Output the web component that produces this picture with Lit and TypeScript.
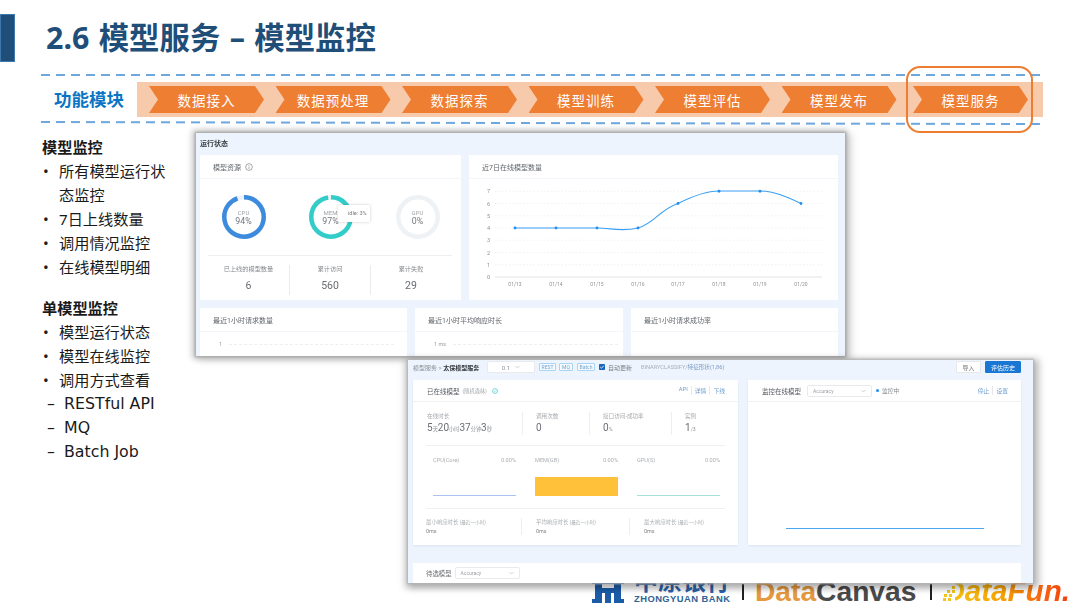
import { LitElement, html, svg, css } from "lit";
import { customElement } from "lit/decorators.js";

const STEPS = ["数据接入", "数据预处理", "数据探索", "模型训练", "模型评估", "模型发布", "模型服务"];

const RINGS = [
  { name: "CPU", pct: 94, color: "#3d8bdc" },
  { name: "MEM", pct: 97, color: "#33cdc9" },
  { name: "GPU", pct: 0, color: "#3d8bdc" },
];

const CHART_X = [46, 87, 128, 169, 209, 250, 291, 332];
const CHART_DAYS = ["01/13", "01/14", "01/15", "01/16", "01/17", "01/18", "01/19", "01/20"];
const CHART_V = [4, 4, 4, 4, 6, 7, 7, 6];
const yOf = (v: number) => 98 - v * 12.25;

const Y_FONT = "Roboto, 'Noto Sans CJK SC', sans-serif";

@customElement("app-root")
export class AppRoot extends LitElement {
  static styles = css`
    :host {
      display: block;
      font-family: "Noto Sans", "Noto Sans CJK SC", sans-serif;
    }
    .slide {
      position: relative;
      width: 1080px;
      height: 608px;
      overflow: hidden;
      background: #fff;
      display: flex;
      flex-direction: column;
    }

    /* head + module strip */
    .head {
      display: flex;
      align-items: center;
      gap: 31px;
      height: 48px;
      margin-top: 14px;
    }
    .accent {
      width: 15px;
      height: 48px;
      box-sizing: border-box;
      background: #1f4e79;
      border: 1px solid #3f78ab;
    }
    .title {
      font-size: 30.4px;
      font-weight: 700;
      word-spacing: 1.5px;
      color: #1f4e79;
      line-height: 48px;
    }
    .dash {
      width: 1002px;
      height: 2px;
      margin-left: 41px;
      background: repeating-linear-gradient(90deg, #6ea7de 0 9px, transparent 9px 15px);
    }
    .dash.top {
      margin-top: 12px;
    }
    .dash.low {
      margin-top: 4.5px;
      transform: rotate(0.11deg);
    }
    .modules {
      display: flex;
      height: 35px;
      margin: 6px 0 0 41px;
      width: 1002px;
    }
    .mod-label {
      width: 96px;
      padding-left: 13px;
      box-sizing: border-box;
      font-size: 17.5px;
      font-weight: 700;
      color: #0b74c4;
      line-height: 35px;
    }
    .band {
      flex: 1;
      display: flex;
      align-items: center;
      gap: 11.5px;
      padding-left: 12px;
      background: #f7caac;
    }
    .step {
      width: 115px;
      height: 27px;
      display: flex;
      align-items: center;
      justify-content: center;
      background: #ee7e32;
      color: #fff;
      font-size: 13.5px;
      letter-spacing: 1px;
      clip-path: polygon(0 0, calc(100% - 9px) 0, 100% 50%, calc(100% - 9px) 100%, 0 100%, 9px 50%);
    }
    .step:last-child {
      margin-left: 5px;
    }
    .mark {
      position: absolute;
      left: 906px;
      top: 66px;
      width: 127px;
      height: 67px;
      box-sizing: border-box;
      border: 2px solid #ed7d31;
      border-radius: 14px;
    }

    /* left text */
    .notes {
      margin: 11px 0 0 42px;
      width: 135px;
      font-size: 15.2px;
      line-height: 24px;
      color: #1a1a1a;
    }
    .notes h3 {
      margin: 0;
      font-size: 15.2px;
      font-weight: 700;
      line-height: 24px;
    }
    .notes ul {
      list-style: none;
      margin: 0 0 17px;
      padding: 0;
    }
    .notes li {
      position: relative;
      padding-left: 17px;
    }
    .notes li::before {
      content: "•";
      position: absolute;
      left: 1px;
    }
    .notes li.sub {
      padding-left: 22px;
      font-family: "DejaVu Sans", sans-serif;
      font-size: 15.8px;
    }
    .notes li.sub::before {
      content: "–";
      left: 5px;
    }

    /* footer logos */
    .logos {
      position: absolute;
      left: 592px;
      top: 570px;
      width: 488px;
      height: 38px;
      display: flex;
      align-items: flex-end;
    }
    .logos > * {
      flex-shrink: 0;
    }
    .bank {
      width: 32px;
      height: 24px;
      margin-bottom: 5px;
    }
    .bank-text {
      margin: 0 0 5px 10px;
      width: 108px;
      color: #2b62a8;
    }
    .bank-cn {
      font-size: 24px;
      font-weight: 700;
      line-height: 24px;
      font-family: "Noto Sans CJK SC", sans-serif;
      white-space: nowrap;
    }
    .bank-en {
      font-family: "Liberation Sans", sans-serif;
      font-size: 9.4px;
      line-height: 9px;
      letter-spacing: 0.45px;
      font-weight: 700;
      color: #2f6394;
      white-space: nowrap;
      margin-top: 2px;
    }
    .sep {
      width: 2px;
      height: 16px;
      margin: 0 0 8px 0;
      background: #222;
    }
    .dc {
      margin: 0 14px 1px 11px;
      font-family: "Liberation Sans", sans-serif;
      font-size: 28.2px;
      font-weight: 700;
      line-height: 32px;
      color: #4a4a4a;
      white-space: nowrap;
    }
    .dc b {
      color: #e5993e;
    }
    .df {
      position: relative;
      margin: 0 0 1px 11px;
      font-family: "Liberation Sans", sans-serif;
      font-size: 29.6px;
      font-weight: 700;
      font-style: italic;
      line-height: 32px;
      white-space: nowrap;
      background: linear-gradient(90deg, #f5c518 0%, #f6a500 45%, #f96a10 75%, #f23c0c 100%);
      -webkit-background-clip: text;
      background-clip: text;
      color: transparent;
    }
    .df svg {
      position: absolute;
      left: 0;
      top: 8px;
      width: 15px;
      height: 20px;
    }

    /* screenshots on the slide */
    .win {
      position: absolute;
      box-sizing: border-box;
      background: #edf4fd;
      overflow: hidden;
      color: #5f6368;
      font-family: Roboto, "Noto Sans CJK SC", sans-serif;
    }
    .frame {
      position: absolute;
      filter: blur(0.3px);
    }
    .frame.one {
      left: 196px;
      top: 133px;
      width: 649px;
      height: 223px;
      box-shadow: 0 0 2px 1px #a8a8a8, -1px 0 6px 3px rgba(0, 0, 0, 0.22), 4px 2px 8px 2px rgba(0, 0, 0, 0.16);
    }
    .frame.two {
      left: 408px;
      top: 360px;
      width: 625px;
      height: 223px;
      box-shadow: 0 0 2px 1px #b4b4b4, 3px 2px 7px 3px rgba(0, 0, 0, 0.25), -2px 3px 7px 2px rgba(0, 0, 0, 0.14);
    }
    .frame .win {
      inset: 0;
    }
    .one .win {
      padding: 0 7px 0 4px;
    }
    .win-title {
      height: 22px;
      font-size: 7px;
      font-weight: 700;
      line-height: 22px;
      color: #3c4043;
    }
    .grid-top {
      display: grid;
      grid-template-columns: 261px 369px;
      gap: 8px;
    }
    .grid-low {
      display: grid;
      grid-template-columns: 207px 208px 207px;
      gap: 8px;
      margin-top: 8px;
    }
    .card {
      background: #fff;
    }
    .grid-top .card {
      height: 145px;
    }
    .grid-low .card {
      height: 60px;
    }
    .card-head {
      display: flex;
      align-items: center;
      gap: 4px;
      height: 23px;
      padding-left: 13px;
      font-size: 7px;
      color: #62666b;
      border-bottom: 1.5px solid #f2f5f9;
    }
    .info {
      width: 8px;
      height: 8px;
    }
    .rings {
      position: relative;
      display: grid;
      grid-template-columns: repeat(3, 87px);
      padding-top: 16px;
    }
    .ring {
      position: relative;
      width: 44px;
      height: 44px;
      justify-self: center;
    }
    .ring svg {
      display: block;
    }
    .ring-text {
      position: absolute;
      inset: 0;
      display: flex;
      flex-direction: column;
      align-items: center;
      justify-content: center;
      line-height: 9px;
    }
    .ring-text span {
      font-size: 6px;
      color: #a0a4a8;
    }
    .ring-text b {
      font-weight: 400;
      font-size: 8.8px;
      color: #73777c;
    }
    .tip {
      position: absolute;
      left: 138px;
      top: 26px;
      width: 32px;
      height: 17px;
      box-sizing: border-box;
      padding-left: 10px;
      background: #fff;
      box-shadow: 0 0 3px rgba(0, 0, 0, 0.22);
      border-radius: 1px;
      font-size: 5.5px;
      line-height: 17px;
      color: #777;
      white-space: nowrap;
    }
    .rule {
      height: 1px;
      background: #eceef1;
      margin: 16px 9px 0 8px;
    }
    .totals {
      display: grid;
      grid-template-columns: repeat(3, 81px);
      margin: 9px 0 0 8px;
    }
    .total {
      height: 30px;
      text-align: center;
      border-left: 1px solid #e9ebee;
    }
    .total:first-child {
      border-left: 0;
    }
    .total span {
      display: block;
      font-size: 6.2px;
      line-height: 9px;
      color: #85898e;
    }
    .total b {
      display: block;
      margin-top: 5px;
      font-weight: 400;
      font-size: 10.5px;
      line-height: 14px;
      color: #686c71;
    }
    .chart {
      display: block;
    }
    .low-body {
      display: flex;
      align-items: center;
      gap: 7px;
      margin: 9px 0 0 19px;
      font-size: 5.5px;
      color: #9aa0a6;
    }
    .low-body i {
      flex: 0 0 165px;
      border-top: 1px dashed #eceef1;
    }

    /* second window */
    .two .win {
      padding: 1px 12px 0 5px;
    }
    .bar {
      display: flex;
      align-items: center;
      height: 12px;
      font-size: 6px;
      color: #8b9096;
    }
    .crumb {
      width: 74px;
      white-space: nowrap;
    }
    .crumb b {
      color: #34383c;
      font-weight: 700;
    }
    .select {
      display: flex;
      align-items: center;
      justify-content: space-between;
      box-sizing: border-box;
      height: 12px;
      padding: 0 5px;
      background: #fff;
      border: 1px solid #e8eaed;
      border-radius: 2px;
      font-size: 5px;
      color: #9a9ea3;
    }
    .select svg {
      width: 5px;
      height: 4px;
    }
    .select.ver {
      width: 48px;
      justify-content: center;
      gap: 5px;
      font-size: 6px;
      color: #8a8e93;
      margin-right: 4px;
    }
    .tag {
      box-sizing: border-box;
      height: 8px;
      padding: 0 2px;
      margin-right: 3px;
      border: 1px solid #a9d5f5;
      background: #f4fafe;
      border-radius: 1px;
      font-size: 5px;
      line-height: 6px;
      color: #74a5cf;
      display: flex;
      align-items: center;
      justify-content: center;
    }
    .check {
      width: 6px;
      height: 6px;
      margin: 0 3px 0 1px;
      display: block;
    }
    .auto {
      width: 33px;
      color: #7d8186;
      white-space: nowrap;
    }
    .shape {
      font-size: 5.6px;
      color: #a9b0b8;
      white-space: nowrap;
    }
    .shape em {
      font-style: normal;
      color: #7d9cc4;
    }
    .btn {
      display: flex;
      align-items: center;
      justify-content: center;
      box-sizing: border-box;
      height: 12px;
      background: #fff;
      border: 1px solid #e6e8eb;
      border-radius: 1px;
      font-size: 6px;
      color: #777;
    }
    .btn.import {
      width: 25px;
      margin-left: auto;
    }
    .btn.primary {
      width: 36px;
      margin-left: 4px;
      background: #1976d2;
      border-color: #1976d2;
      color: #fff;
    }
    .panels {
      display: grid;
      grid-template-columns: 325px 273px;
      gap: 10px;
      margin-top: 7px;
    }
    .panel {
      height: 165px;
      background: #fff;
      box-shadow: 0 1px 2px rgba(90, 120, 160, 0.12);
    }
    .panel-head {
      display: flex;
      align-items: center;
      height: 21px;
      padding: 0 13px 0 14px;
      font-size: 6.5px;
      color: #55595e;
      border-bottom: 1px solid #eff1f4;
    }
    .panel-head small {
      font-size: 5.2px;
      color: #a3a7ab;
      margin-left: 3px;
    }
    .ok {
      width: 6px;
      height: 6px;
      margin-left: 5px;
    }
    .links {
      margin-left: auto;
      display: flex;
      gap: 3px;
      font-size: 5.8px;
      color: #6d9ccc;
    }
    .links span + span {
      border-left: 1px solid #e6e8eb;
      padding-left: 3px;
    }
    .stats {
      display: grid;
      grid-template-columns: 95px 67px 82px 54px;
      margin: 10px 13px 0 14px;
    }
    .stat {
      height: 23px;
      padding-left: 13px;
      border-left: 1px solid #eceef1;
    }
    .stat:first-child {
      padding-left: 0;
      border-left: 0;
    }
    .stat span {
      display: block;
      font-size: 5.6px;
      line-height: 8px;
      color: #a5a9ad;
    }
    .stat b {
      display: block;
      font-weight: 400;
      font-size: 10px;
      line-height: 13px;
      margin-top: 1px;
      color: #6b6f74;
      white-space: nowrap;
    }
    .stat b small {
      font-size: 5.2px;
      color: #8d9196;
    }
    .hr {
      height: 1px;
      background: #eef0f2;
      margin: 10px 13px 0 13px;
    }
    .hr.wide {
      margin-top: 12px;
    }
    .usage {
      display: grid;
      grid-template-columns: repeat(3, 83px);
      gap: 19px;
      margin: 9px 0 0 20px;
    }
    .use-top {
      display: flex;
      justify-content: space-between;
      font-size: 5.6px;
      line-height: 10px;
      color: #abafb3;
    }
    .use-plot {
      height: 31px;
      display: flex;
      align-items: flex-end;
    }
    .use-plot i {
      display: block;
      width: 100%;
    }
    .lat {
      display: grid;
      grid-template-columns: 95px 108px 96px;
      margin: 9px 13px 0 13px;
    }
    .lat div {
      height: 17px;
      padding-left: 14px;
      border-left: 1px solid #eceef1;
      font-size: 5.4px;
      line-height: 9px;
      color: #a9adb1;
      white-space: nowrap;
    }
    .lat div:first-child {
      padding-left: 0;
      border-left: 0;
    }
    .lat small {
      font-size: 4.6px;
    }
    .lat span {
      display: block;
      color: #80848a;
    }
    .head-sel {
      margin: 0 4px 0 6px;
      width: 65px;
    }
    .dot {
      width: 3px;
      height: 3px;
      border-radius: 50%;
      background: #1890ff;
      margin-right: 3px;
    }
    .live {
      font-size: 5.8px;
      color: #85898e;
    }
    .plot-flat {
      height: 144px;
      display: flex;
      justify-content: center;
      align-items: flex-end;
    }
    .plot-flat i {
      width: 198px;
      height: 1px;
      margin-bottom: 17px;
      background: #4aa6f0;
    }
    .pending {
      display: flex;
      align-items: center;
      height: 20px;
      margin-top: 18px;
      padding-left: 13px;
      background: #fff;
      font-size: 6.4px;
      color: #686c71;
    }
    .pending .select {
      width: 65px;
      margin-left: 3px;
    }
  `;

  private chevron() {
    return html`<svg viewBox="0 0 10 8"><path d="M1 2l4 4 4-4" fill="none" stroke="#b5b8bc" stroke-width="1.2" /></svg>`;
  }

  private ring(r: { name: string; pct: number; color: string }) {
    const c = 2 * Math.PI * 19.75;
    const len = (r.pct / 100) * c;
    return html`
      <div class="ring">
        <svg width="44" height="44" viewBox="0 0 44 44">
          <circle cx="22" cy="22" r="19.75" fill="none" stroke="#eff2f5" stroke-width="4.5" />
          <circle
            cx="22"
            cy="22"
            r="19.75"
            fill="none"
            stroke=${r.color}
            stroke-width="4.5"
            stroke-dasharray="${len} ${c}"
            transform="rotate(-90 22 22)"
          />
        </svg>
        <div class="ring-text"><span>${r.name}</span><b>${r.pct}%</b></div>
      </div>
    `;
  }

  private trendChart() {
    const line =
      "M46 49 L128 49 C142 49 152 53 169 49 C186 44 190 31 209 24.5 C222 18 236 12 250 12 L291 12 C305 12 318 18 332 24.5";
    return html`
      <svg class="chart" width="369" height="120" viewBox="0 0 369 120">
        ${[1, 2, 3, 4, 5, 6, 7].map(
          (v) => svg`<line x1="26" x2="353" y1=${yOf(v)} y2=${yOf(v)} stroke="#eceef1" stroke-width="0.8" stroke-dasharray="1.5 2" />`
        )}
        <line x1="26" x2="353" y1="98" y2="98" stroke="#d9dcdf" stroke-width="0.8" />
        ${[0, 1, 2, 3, 4, 5, 6, 7].map(
          (v) => svg`<text x="21" y=${yOf(v) + 2} text-anchor="end" font-size="5.5" fill="#8d9196" font-family=${Y_FONT}>${v}</text>`
        )}
        ${CHART_DAYS.map(
          (d, i) => svg`<text x=${CHART_X[i]} y="107" text-anchor="middle" font-size="5" fill="#8d9196" font-family=${Y_FONT}>${d}</text>`
        )}
        <path d=${line} fill="none" stroke="#3aa0f5" stroke-width="1.1" />
        ${CHART_V.map((v, i) => svg`<circle cx=${CHART_X[i]} cy=${yOf(v)} r="1.4" fill="#1f8ff0" />`)}
      </svg>
    `;
  }

  private windowOne() {
    return html`
      <div class="frame one">
        <div class="win">
          <div class="win-title">运行状态</div>
          <div class="grid-top">
            <div class="card">
              <div class="card-head">
                模型资源
                <svg class="info" viewBox="0 0 10 10">
                  <circle cx="5" cy="5" r="4.2" fill="none" stroke="#777" stroke-width="0.8" />
                  <path d="M5 4.4v3M5 2.5v1" stroke="#777" stroke-width="0.8" />
                </svg>
              </div>
              <div class="rings">
                ${RINGS.map((r) => this.ring(r))}
                <div class="tip">idle: 3%</div>
              </div>
              <div class="rule"></div>
              <div class="totals">
                <div class="total"><span>已上线的模型数量</span><b>6</b></div>
                <div class="total"><span>累计访问</span><b>560</b></div>
                <div class="total"><span>累计失败</span><b>29</b></div>
              </div>
            </div>
            <div class="card">
              <div class="card-head">近7日在线模型数量</div>
              ${this.trendChart()}
            </div>
          </div>
          <div class="grid-low">
            <div class="card">
              <div class="card-head">最近1小时请求数量</div>
              <div class="low-body"><span>1</span><i></i></div>
            </div>
            <div class="card">
              <div class="card-head">最近1小时平均响应时长</div>
              <div class="low-body"><span>1 ms</span><i></i></div>
            </div>
            <div class="card">
              <div class="card-head">最近1小时请求成功率</div>
            </div>
          </div>
        </div>
      </div>
    `;
  }

  private windowTwo() {
    return html`
      <div class="frame two">
        <div class="win">
          <div class="bar">
            <div class="crumb">模型服务 &gt; <b>太保模型服务</b></div>
            <div class="select ver">0.1 ${this.chevron()}</div>
            <div class="tag" style="width:17px">REST</div>
            <div class="tag" style="width:14px;margin-right:4px">MQ</div>
            <div class="tag" style="width:18px">Batch</div>
            <svg class="check" viewBox="0 0 6 6">
              <rect width="6" height="6" rx="0.8" fill="#1768b8" />
              <path d="M1.2 3l1.3 1.3 2.3-2.6" fill="none" stroke="#fff" stroke-width="0.8" />
            </svg>
            <div class="auto">自动更新</div>
            <div class="shape">BINARYCLASSIFY/<em>特征形状(1,86)</em></div>
            <div class="btn import">导入</div>
            <div class="btn primary">评估历史</div>
          </div>
          <div class="panels">
            <div class="panel">
              <div class="panel-head">
                已在线模型<small>(随机森林)</small>
                <svg class="ok" viewBox="0 0 10 10">
                  <circle cx="5" cy="5" r="4" fill="none" stroke="#5ccfd0" stroke-width="1.4" />
                  <path d="M3.2 5l1.3 1.3 2.3-2.5" fill="none" stroke="#5ccfd0" stroke-width="1" />
                </svg>
                <div class="links"><span>API</span><span>详情</span><span>下线</span></div>
              </div>
              <div class="stats">
                <div class="stat">
                  <span>在线时长</span>
                  <b>5<small>天</small>20<small>小时</small>37<small>分钟</small>3<small>秒</small></b>
                </div>
                <div class="stat"><span>调用次数</span><b>0</b></div>
                <div class="stat"><span>接口访问-成功率</span><b>0<small>%</small></b></div>
                <div class="stat"><span>实例</span><b>1<small>/3</small></b></div>
              </div>
              <div class="hr"></div>
              <div class="usage">
                <div>
                  <div class="use-top"><span>CPU(Core)</span><span>0.00%</span></div>
                  <div class="use-plot"><i style="height:1px;background:#a9c4f0"></i></div>
                </div>
                <div>
                  <div class="use-top"><span>MEM(GB)</span><span>0.00%</span></div>
                  <div class="use-plot"><i style="height:19px;background:#ffc13a"></i></div>
                </div>
                <div>
                  <div class="use-top"><span>GPU(S)</span><span>0.00%</span></div>
                  <div class="use-plot"><i style="height:1px;background:#a6e0da"></i></div>
                </div>
              </div>
              <div class="hr wide"></div>
              <div class="lat">
                <div>最小响应时长 <small>(最近一小时)</small><span>0ms</span></div>
                <div>平均响应时长 <small>(最近一小时)</small><span>0ms</span></div>
                <div>最大响应时长 <small>(最近一小时)</small><span>0ms</span></div>
              </div>
            </div>
            <div class="panel">
              <div class="panel-head">
                监控在线模型
                <div class="select head-sel">Accuracy ${this.chevron()}</div>
                <div class="dot"></div>
                <div class="live">监控中</div>
                <div class="links"><span>停止</span><span>设置</span></div>
              </div>
              <div class="plot-flat"><i></i></div>
            </div>
          </div>
          <div class="pending">
            待选模型
            <div class="select">Accuracy ${this.chevron()}</div>
          </div>
        </div>
      </div>
    `;
  }

  render() {
    return html`
      <div class="slide">
        <div class="head">
          <div class="accent"></div>
          <div class="title">2.6 模型服务 – 模型监控</div>
        </div>
        <div class="dash top"></div>
        <div class="modules">
          <div class="mod-label">功能模块</div>
          <div class="band">${STEPS.map((s) => html`<div class="step">${s}</div>`)}</div>
        </div>
        <div class="dash low"></div>
        <div class="mark"></div>

        <div class="notes">
          <h3>模型监控</h3>
          <ul>
            <li>所有模型运行状态监控</li>
            <li>7日上线数量</li>
            <li>调用情况监控</li>
            <li>在线模型明细</li>
          </ul>
          <h3>单模型监控</h3>
          <ul>
            <li>模型运行状态</li>
            <li>模型在线监控</li>
            <li>调用方式查看</li>
            <li class="sub">RESTful API</li>
            <li class="sub">MQ</li>
            <li class="sub">Batch Job</li>
          </ul>
        </div>

        <div class="logos">
          <svg class="bank" viewBox="0 0 32 24">
            <path
              fill="#1a5ca8"
              d="M0 0h32v5H0zM3 5h7v4h12V5h7v15h3v4h-10v-10H10v10H0v-4h3zM13 14h6v10h-6z"
            />
          </svg>
          <div class="bank-text">
            <div class="bank-cn">中原银行</div>
            <div class="bank-en">ZHONGYUAN BANK</div>
          </div>
          <div class="sep"></div>
          <div class="dc"><b>Data</b>Canvas</div>
          <div class="sep"></div>
          <div class="df">
            DataFun.
            <svg viewBox="0 0 15 20">
              <rect x="0" y="0" width="12" height="20" fill="#fff" />
              <path
                fill="#f5c518"
                d="M9 3h3v3H9zM4 7h3v3H4zM9 7h3v3H9zM1 11h3v3H1zM6 11h3v3H6zM0 15h3v3H0zM5 15h3v3H5z"
              />
            </svg>
          </div>
        </div>

        ${this.windowOne()} ${this.windowTwo()}
      </div>
    `;
  }
}
